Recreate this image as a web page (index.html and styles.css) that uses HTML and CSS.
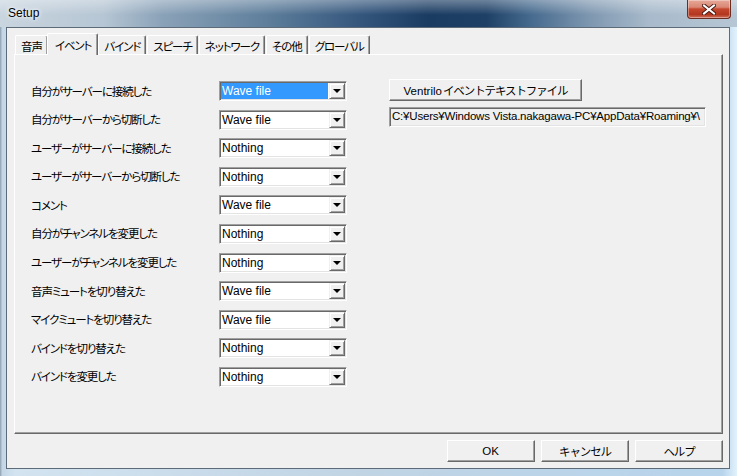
FILE: index.html
```html
<!DOCTYPE html>
<html lang="ja">
<head>
    <meta charset="UTF-8">
    <title>Setup</title>
    <link rel="stylesheet" href="styles.css">
</head>
<body>
    <div class="window">
        <!-- タイトルバー -->
        <div class="titlebar">
            <span class="title">Setup</span>
            <button class="close-btn" aria-label="閉じる">
                <svg width="14" height="11" viewBox="0 0 14 11">
                    <path d="M2 1.5 L12 9.5 M12 1.5 L2 9.5" stroke="#4a1a12" stroke-width="4" stroke-linecap="square"/>
                    <path d="M2 1.5 L12 9.5 M12 1.5 L2 9.5" stroke="#fff" stroke-width="2" stroke-linecap="square"/>
                </svg>
            </button>
        </div>

        <div class="client">
            <!-- タブ -->
            <div class="tabs">
                <div class="tab">音声</div>
                <div class="tab active">イベント</div>
                <div class="tab">バインド</div>
                <div class="tab">スピーチ</div>
                <div class="tab">ネットワーク</div>
                <div class="tab">その他</div>
                <div class="tab">グローバル</div>
            </div>

            <div class="panel">
                <!-- イベントごとの通知 -->
                <div class="events">
                    <label>自分がサーバーに接続した</label>
                    <div class="combo"><span class="value selected">Wave file</span><span class="drop"></span></div>
                    <label>自分がサーバーから切断した</label>
                    <div class="combo"><span class="value">Wave file</span><span class="drop"></span></div>
                    <label>ユーザーがサーバーに接続した</label>
                    <div class="combo"><span class="value">Nothing</span><span class="drop"></span></div>
                    <label>ユーザーがサーバーから切断した</label>
                    <div class="combo"><span class="value">Nothing</span><span class="drop"></span></div>
                    <label>コメント</label>
                    <div class="combo"><span class="value">Wave file</span><span class="drop"></span></div>
                    <label>自分がチャンネルを変更した</label>
                    <div class="combo"><span class="value">Nothing</span><span class="drop"></span></div>
                    <label>ユーザーがチャンネルを変更した</label>
                    <div class="combo"><span class="value">Nothing</span><span class="drop"></span></div>
                    <label>音声ミュートを切り替えた</label>
                    <div class="combo"><span class="value">Wave file</span><span class="drop"></span></div>
                    <label>マイクミュートを切り替えた</label>
                    <div class="combo"><span class="value">Wave file</span><span class="drop"></span></div>
                    <label>バインドを切り替えた</label>
                    <div class="combo"><span class="value">Nothing</span><span class="drop"></span></div>
                    <label>バインドを変更した</label>
                    <div class="combo"><span class="value">Nothing</span><span class="drop"></span></div>
                </div>

                <!-- テキストファイル -->
                <div class="textfile">
                    <button class="btn file-btn"><span class="latin">Ventrilo</span>イベントテキストファイル</button>
                    <div class="path">C:¥Users¥Windows Vista.nakagawa-PC¥AppData¥Roaming¥\</div>
                </div>
            </div>

            <div class="actions">
                <button class="btn"><span class="latin">OK</span></button>
                <button class="btn">キャンセル</button>
                <button class="btn">ヘルプ</button>
            </div>
        </div>
    </div>
</body>
</html>
```

FILE: styles.css
```css
body {
    margin: 0;
    font-family: "Liberation Sans", "Noto Sans CJK JP", sans-serif;
    font-size: 12px;
    font-feature-settings: "palt";
    color: #000;
}

.window {
    width: 737px;
    height: 476px;
    display: flex;
    flex-direction: column;
    box-sizing: border-box;
    padding: 0 7px 7px 6px;
    background: linear-gradient(to right, #8d9eab 0, #c3d6e6 0.3%, #d3e3f0 2%, #c0d4e4 50%, #b7d4ec 98%, #e2f2fb 100%);
}

/* タイトルバー */
.titlebar {
    height: 27px;
    margin: 0 -7px 0 -6px;
    display: flex;
    align-items: flex-start;
    background:
        linear-gradient(to bottom, rgba(255, 255, 255, 0.35), rgba(255, 255, 255, 0) 55%),
        linear-gradient(to right, #c9d5df 0, #b6c6d4 14%, #8aa2b8 22%, #5f7f9c 36%, #31537a 50%, #1b3c62 58%, #1e4066 66%, #466a8e 72%, #7e97b0 80%, #a8bacb 88%, #b6c6d4 100%);
}

.title {
    margin: 6px 0 0 8px;
    font-size: 12px;
    text-shadow: 0 0 6px #fff, 0 0 3px #fff;
}

.close-btn {
    margin: 0 6px 0 auto;
    width: 44px;
    height: 19px;
    padding: 0;
    display: flex;
    align-items: center;
    justify-content: center;
    border: 1px solid #6b2c22;
    border-top: none;
    border-radius: 0 0 4px 4px;
    background-color: #c9553e;
    background-image: linear-gradient(to bottom, #e6a898 0, #d98774 40%, #c4472e 50%, #b3361e 80%, #d0705a 100%);
    box-shadow: inset 0 0 0 1px rgba(255, 255, 255, 0.35);
}

/* クライアント領域 */
.client {
    flex: 1;
    display: flex;
    flex-direction: column;
    background: #f0f0f0;
    border: 1px solid #5d6b78;
    padding: 5px 6px 6px 7px;
}

/* 日本語のラベル類 (MS UI Gothic 風に詰める) */
.tab,
label,
.btn {
    font-size: 11.5px;
    letter-spacing: -1.1px;
}

.latin {
    letter-spacing: 0;
    margin-right: 1px;
}

.tabs {
    height: 21px;
    display: flex;
    align-items: flex-end;
    padding-left: 1px;
}

.tab {
    height: 19px;
    box-sizing: border-box;
    padding: 2px 5px 0 5px;
    margin-right: 1px;
    border-top: 1px solid #fff;
    border-left: 1px solid #fff;
    border-right: 1px solid #696969;
    box-shadow: inset -1px 0 #a0a0a0;
    border-radius: 2px 2px 0 0;
    white-space: nowrap;
}

.tab.active {
    position: relative;
    z-index: 1;
    height: 22px;
    margin: 0 -1px -1px -2px;
    padding: 3px 6px 0 7px;
    background: #f0f0f0;
}

.tab.active + .tab {
    margin-left: 1px;
}

.panel {
    flex: 1;
    display: flex;
    align-items: flex-start;
    padding: 24px 0 0 16px;
    border-top: 1px solid #fff;
    border-left: 1px solid #fff;
    border-right: 1px solid #696969;
    border-bottom: 1px solid #696969;
    box-shadow: inset -1px -1px #a0a0a0;
}

.events {
    margin-top: 2px;
    display: grid;
    grid-template-columns: 188px 128px;
    grid-auto-rows: 20px;
    row-gap: 8.6px;
    align-items: center;
}

label {
    padding-bottom: 1px;
}

/* コンボボックス */
.combo {
    height: 20px;
    box-sizing: border-box;
    display: flex;
    padding: 1px;
    background: #fff;
    border-top: 1px solid #a0a0a0;
    border-left: 1px solid #a0a0a0;
    border-bottom: 1px solid #fff;
    border-right: 1px solid #fff;
    box-shadow: inset 1px 1px #696969, inset -1px -1px #e3e3e3;
}

.value {
    flex: 1;
    padding: 0 1px;
    margin-right: 1px;
    line-height: 16px;
    white-space: nowrap;
}

.value.selected {
    background: #3399ff;
    color: #fff;
}

.drop {
    width: 16px;
    height: 16px;
    box-sizing: border-box;
    display: flex;
    align-items: center;
    justify-content: center;
    background: #f0f0f0;
    border-top: 1px solid #f0f0f0;
    border-left: 1px solid #f0f0f0;
    border-right: 1px solid #696969;
    border-bottom: 1px solid #696969;
    box-shadow: inset 1px 1px #fff, inset -1px -1px #a0a0a0;
}

.drop::after {
    content: "";
    border-top: 4px solid #000;
    border-left: 4px solid transparent;
    border-right: 4px solid transparent;
}

/* ボタン */
.btn {
    height: 22px;
    padding: 0;
    font-family: inherit;
    color: #000;
    background: #f0f0f0;
    border-top: 1px solid #fff;
    border-left: 1px solid #fff;
    border-right: 1px solid #696969;
    border-bottom: 1px solid #696969;
    box-shadow: inset -1px -1px #a0a0a0;
}

.textfile {
    margin-left: 42px;
    display: flex;
    flex-direction: column;
    gap: 6px;
}

.file-btn {
    width: 193px;
    height: 22px;
}

.path {
    width: 317px;
    height: 20px;
    box-sizing: border-box;
    padding-left: 2px;
    line-height: 17px;
    font-size: 11.5px;
    letter-spacing: -0.2px;
    white-space: nowrap;
    overflow: hidden;
    background: #f0f0f0;
    border-top: 1px solid #a0a0a0;
    border-left: 1px solid #a0a0a0;
    border-bottom: 1px solid #fff;
    border-right: 1px solid #fff;
    box-shadow: inset 1px 1px #696969, inset -1px -1px #e3e3e3;
}

.actions {
    margin-top: 6px;
    display: flex;
    justify-content: flex-end;
    gap: 6px;
}

.actions .btn {
    width: 88px;
}
```
